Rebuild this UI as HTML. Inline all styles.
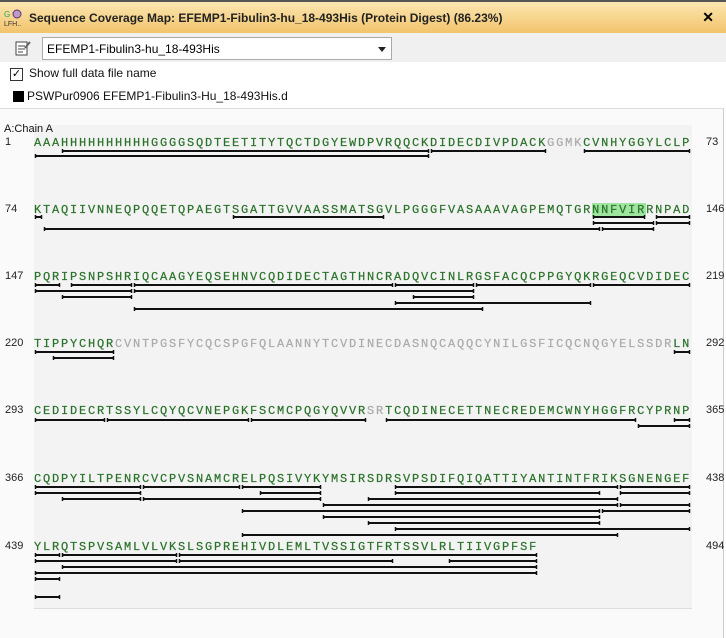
<!DOCTYPE html>
<html><head><meta charset="utf-8">
<style>
*{margin:0;padding:0;box-sizing:border-box}
body{width:726px;height:638px;background:#fff;font-family:"Liberation Sans",sans-serif;position:relative;overflow:hidden}
.hdr{position:absolute;left:0;top:0;width:726px;height:33px;border-top:2px solid #555;background:linear-gradient(#fbe6b0,#f2c46c);}
.hdr .t{position:absolute;left:29px;top:9px;font-size:12px;font-weight:bold;color:#222}
.hdr .x{position:absolute;right:12px;top:7px;font-size:14px;font-weight:bold}
.tb{position:absolute;left:0;top:33px;width:726px;height:29px;background:#f0f0f0}
.dd{position:absolute;left:42px;top:4px;width:350px;height:23px;border:1px solid #aaa;background:#fff;font-size:12px;padding:4px 4px}
.dd:after{content:"";position:absolute;right:5px;top:9px;border-left:4px solid transparent;border-right:4px solid transparent;border-top:5px solid #222}
.chk{position:absolute;left:10px;top:68px;width:13px;height:13px;border:1px solid #333;background:#fff;font-size:11px;line-height:11px;text-align:center}
.lbl{position:absolute;font-size:12px;color:#111}
.area{position:absolute;left:0;top:108px;width:724px;height:530px;background:#fafafa;border-top:1px solid #ddd;border-right:1px solid #ccc}
.panel{position:absolute;left:34px;top:125px;width:658px;height:484px;background:#f3f3f3;border-bottom:1px solid #ddd}
.seq{position:absolute;left:34px;font-family:"Liberation Mono",monospace;font-size:12px;letter-spacing:1.8px;color:#2a722a;-webkit-text-stroke:0.2px #2a722a;white-space:pre;line-height:14px}
.g{color:#aaa;-webkit-text-stroke:0.2px #aaa}
.hl{background:#9fe59f}
.n{position:absolute;font-size:11px;color:#222}
</style></head><body>
<div class="hdr"><svg style="position:absolute;left:4px;top:6px" width="22" height="20"><text x="0" y="9" font-size="8" font-family="Liberation Sans" fill="#2a6">G</text><circle cx="13" cy="6" r="4" fill="#b9c" stroke="#636" /><text x="0" y="18" font-size="7" font-family="Liberation Sans" fill="#333">LFH..</text></svg><span class="t">Sequence Coverage Map: EFEMP1-Fibulin3-hu_18-493His (Protein Digest) (86.23%)</span><span class="x">✕</span></div>
<div class="tb"><svg style="position:absolute;left:15px;top:7px" width="16" height="16"><rect x="1" y="2" width="11" height="13" fill="#fff" stroke="#444"/><path d="M3 6h7M3 9h7M3 12h5" stroke="#444"/><path d="M10 8l5-6" stroke="#666" stroke-width="2"/></svg><div class="dd">EFEMP1-Fibulin3-hu_18-493His</div></div>
<div class="chk">✓</div>
<div class="lbl" style="left:29px;top:66px">Show full data file name</div>
<div style="position:absolute;left:13px;top:91px;width:11px;height:11px;background:#000"></div>
<div class="lbl" style="left:27px;top:89px">PSWPur0906 EFEMP1-Fibulin3-Hu_18-493His.d</div>
<div class="area"></div>
<div class="panel"></div>
<div class="lbl" style="left:4px;top:123px;font-size:11px">A:Chain A</div>

<div class="n" style="left:5px;top:136px">1</div><div class="n" style="left:706px;top:136px">73</div>
<div class="seq" style="top:136px">AAAHHHHHHHHHHGGGGSQDTEETITYTQCTDGYEWDPVRQQCKDIDECDIVPDACK<span class="g">GGMK</span>CVNHYGGYLCLP</div>
<div class="n" style="left:5px;top:203px">74</div><div class="n" style="left:706px;top:203px">146</div>
<div class="seq" style="top:203px">KTAQIIVNNEQPQQETQPAEGTSGATTGVVAASSMATSGVLPGGGFVASAAAVAGPEMQTGR<span class="hl">NNFVIR</span>RNPAD</div>
<div class="n" style="left:5px;top:270px">147</div><div class="n" style="left:706px;top:270px">219</div>
<div class="seq" style="top:270px">PQRIPSNPSHRIQCAAGYEQSEHNVCQDIDECTAGTHNCRADQVCINLRGSFACQCPPGYQKRGEQCVDIDEC</div>
<div class="n" style="left:5px;top:337px">220</div><div class="n" style="left:706px;top:337px">292</div>
<div class="seq" style="top:337px">TIPPYCHQR<span class="g">CVNTPGSFYCQCSPGFQLAANNYTCVDINECDASNQCAQQCYNILGSFICQCNQGYELSSDR</span>LN</div>
<div class="n" style="left:5px;top:404px">293</div><div class="n" style="left:706px;top:404px">365</div>
<div class="seq" style="top:404px">CEDIDECRTSSYLCQYQCVNEPGKFSCMCPQGYQVVR<span class="g">SR</span>TCQDINECETTNECREDEMCWNYHGGFRCYPRNP</div>
<div class="n" style="left:5px;top:472px">366</div><div class="n" style="left:706px;top:472px">438</div>
<div class="seq" style="top:472px">CQDPYILTPENRCVCPVSNAMCRELPQSIVYKYMSIRSDRSVPSDIFQIQATTIYANTINTFRIKSGNENGEF</div>
<div class="n" style="left:5px;top:540px">439</div><div class="n" style="left:706px;top:540px">494</div>
<div class="seq" style="top:540px">YLRQTSPVSAMLVLVKSLSGPREHIVDLEMLTVSSIGTFRTSSVLRLTIIVGPFSF</div>

<svg id="bars" style="position:absolute;left:0;top:0" width="726" height="638"></svg>
<script>
var B=[
[151,[[3,44],[44,57],[61,73]]],[156,[[0,44]]],
[217,[[0,1],[22,39],[62,68],[69,73]]],[223,[[62,69],[69,73]]],[229,[[1,63],[63,69]]],
[285,[[0,3],[4,11],[11,40],[40,49],[49,62],[62,73]]],[291,[[0,11],[11,49]]],[297,[[3,11],[42,49]]],[303,[[40,62]]],[309,[[11,50]]],
[352,[[0,9],[71,73]]],[358,[[2,9]]],
[420,[[0,8],[8,24],[24,37],[39,67],[71,73]]],[426,[[67,73]]],
[487,[[0,12],[12,23],[23,32],[40,65],[65,73]]],[493,[[0,12],[25,32],[40,63],[65,73]]],[499,[[3,12],[12,32],[37,65]]],[505,[[32,65],[65,73]]],[511,[[23,63],[63,73]]],[517,[[32,63]]],[523,[[37,63]]],[529,[[40,73]]],[535,[[23,65]]],
[555,[[0,3],[3,16],[16,56]]],[561,[[0,16],[16,40],[46,56]]],[567,[[3,56]]],[573,[[0,56]]],[579,[[0,3]]],[597,[[0,3]]]
];
var s='';
B.forEach(function(r){var y=r[0];r[1].forEach(function(b){var x1=34+9*b[0]+1,x2=34+9*b[1]-1;
s+='<line x1="'+x1+'" y1="'+y+'" x2="'+x2+'" y2="'+y+'" stroke="#111" stroke-width="2"/>';
s+='<line x1="'+(x1+0.5)+'" y1="'+(y-2)+'" x2="'+(x1+0.5)+'" y2="'+(y+2)+'" stroke="#111" stroke-width="1.5"/>';
s+='<line x1="'+(x2-0.5)+'" y1="'+(y-2)+'" x2="'+(x2-0.5)+'" y2="'+(y+2)+'" stroke="#111" stroke-width="1.5"/>';});});
document.getElementById('bars').innerHTML=s;
</script>
</body></html>
